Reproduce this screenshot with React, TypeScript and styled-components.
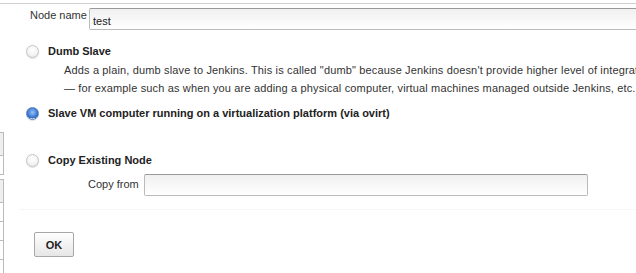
import React from "react";
import styled, { createGlobalStyle } from "styled-components";

const GlobalStyle = createGlobalStyle`
  body {
    margin: 0;
    background: #fff;
    font-family: "Liberation Sans", Arial, Helvetica, sans-serif;
    font-size: 11px;
    color: #333;
    overflow: hidden;
  }
`;

interface SidebarTable {
  rows: number;
}

function App() {
  const tables: SidebarTable[] = [{ rows: 1 }, { rows: 4 }];

  return (
    <>
      <GlobalStyle />
      <StyledPage>
        <StyledSidebar>
          {tables.map((table, i) => (
            <StyledPane key={i}>
              <StyledPaneHeader />
              {Array.from({ length: table.rows }).map((_, j) => (
                <StyledPaneRow key={j} />
              ))}
            </StyledPane>
          ))}
        </StyledSidebar>
        <StyledMain>
          <StyledFieldRow indent={4} labelWidth={53} labelTop={1}>
            <StyledLabel>Node name</StyledLabel>
            <StyledInput defaultValue="test" width={600} />
          </StyledFieldRow>

          <StyledRadioBlock spacing={14}>
            <StyledRadioRow>
              <StyledRadio />
              <StyledRadioLabel>Dumb Slave</StyledRadioLabel>
            </StyledRadioRow>
            <StyledDescription>
              Adds a plain, dumb slave to Jenkins. This is called "dumb" because Jenkins doesn't provide higher level of integration with these slaves, such as dynamic provisioning.
              <br />
              — for example such as when you are adding a physical computer, virtual machines managed outside Jenkins, etc.
            </StyledDescription>
          </StyledRadioBlock>

          <StyledRadioBlock spacing={9}>
            <StyledRadioRow>
              <StyledRadio checked />
              <StyledRadioLabel>Slave VM computer running on a virtualization platform (via ovirt)</StyledRadioLabel>
            </StyledRadioRow>
          </StyledRadioBlock>

          <StyledRadioBlock spacing={33}>
            <StyledRadioRow>
              <StyledRadio />
              <StyledRadioLabel>Copy Existing Node</StyledRadioLabel>
            </StyledRadioRow>
            <StyledFieldRow indent={62} labelWidth={50} labelTop={4} spacing={7}>
              <StyledLabel>Copy from</StyledLabel>
              <StyledInput width={444} />
            </StyledFieldRow>
          </StyledRadioBlock>

          <StyledDivider />
          <StyledButton>OK</StyledButton>
        </StyledMain>
      </StyledPage>
    </>
  );
}

export default App;

const StyledPage = styled.div`
  display: grid;
  grid-template-columns: 4px 1fr;
  width: 636px;
  height: 273px;
  border-top: 1px solid #d0d0d0;
  margin-top: 3px;
  overflow: hidden;
`;

const StyledSidebar = styled.div`
  display: flex;
  flex-direction: column;
  gap: 4px;
  padding-top: 128px;
`;

const StyledPane = styled.div`
  border: 1px solid #bbb;
  border-left: none;
`;

const StyledPaneHeader = styled.div`
  height: 22px;
  background: #eee;
  border-bottom: 1px solid #bbb;
`;

const StyledPaneRow = styled.div`
  height: 18px;
  border-bottom: 1px solid #bbb;

  &:last-child {
    border-bottom: none;
  }
`;

const StyledMain = styled.div`
  display: flex;
  flex-direction: column;
  padding: 4px 0 0 22px;
`;

const StyledFieldRow = styled.div<{ indent: number; labelWidth: number; labelTop: number; spacing?: number }>`
  display: flex;
  align-items: flex-start;
  gap: 6px;
  margin-top: ${(p) => p.spacing ?? 0}px;
  padding-left: ${(p) => p.indent}px;

  & > label {
    width: ${(p) => p.labelWidth}px;
    padding-top: ${(p) => p.labelTop}px;
  }
`;

const StyledLabel = styled.label`
  text-align: right;
  white-space: nowrap;
  color: #333;
`;

const StyledInput = styled.input<{ width: number }>`
  box-sizing: border-box;
  width: ${(p) => p.width}px;
  height: 22px;
  flex-shrink: 0;
  border: 1px solid #bbb;
  border-top-color: #999;
  border-radius: 2px;
  background: linear-gradient(#f0f0f0, #fff);
  font-family: "Liberation Sans", Arial, sans-serif;
  font-size: 11px;
  color: #222;
  padding: 4px 3px 0;
`;

const StyledRadioBlock = styled.div<{ spacing: number }>`
  display: flex;
  flex-direction: column;
  margin-top: ${(p) => p.spacing}px;
`;

const StyledRadioRow = styled.div`
  display: flex;
  align-items: center;
  gap: 9px;
  height: 14px;
`;

const StyledRadio = styled.span<{ checked?: boolean }>`
  box-sizing: border-box;
  width: 13px;
  height: 13px;
  border-radius: 50%;
  border: 1px solid ${(p) => (p.checked ? "#5f84b8" : "#c4c4c4")};
  background: ${(p) =>
    p.checked
      ? "radial-gradient(circle at 50% 40%, #9cc3f5 0, #4a88dd 45%, #2f66b8 70%, #dfe8f3 72%)"
      : "radial-gradient(circle at 50% 35%, #ffffff 0, #f4f4f4 55%, #e2e2e2 100%)"};
  box-shadow: 0 1px 1px rgba(0, 0, 0, 0.12);
`;

const StyledRadioLabel = styled.span`
  font-weight: bold;
  color: #222;
`;

const StyledDescription = styled.div`
  padding-left: 38px;
  margin-top: 3px;
  line-height: 18px;
  letter-spacing: 0.15px;
  white-space: nowrap;
  color: #333;
`;

const StyledDivider = styled.div`
  height: 0;
  margin: 13px 0 0 -6px;
  border-top: 1px dotted #f0f0f0;
`;

const StyledButton = styled.button`
  box-sizing: border-box;
  width: 40px;
  height: 25px;
  margin: 22px 0 0 8px;
  border: 1px solid #a8a8a8;
  border-radius: 2px;
  background: linear-gradient(#ffffff, #e6e6e6);
  font-family: "Liberation Sans", Arial, sans-serif;
  font-size: 11px;
  font-weight: bold;
  color: #222;
`;
